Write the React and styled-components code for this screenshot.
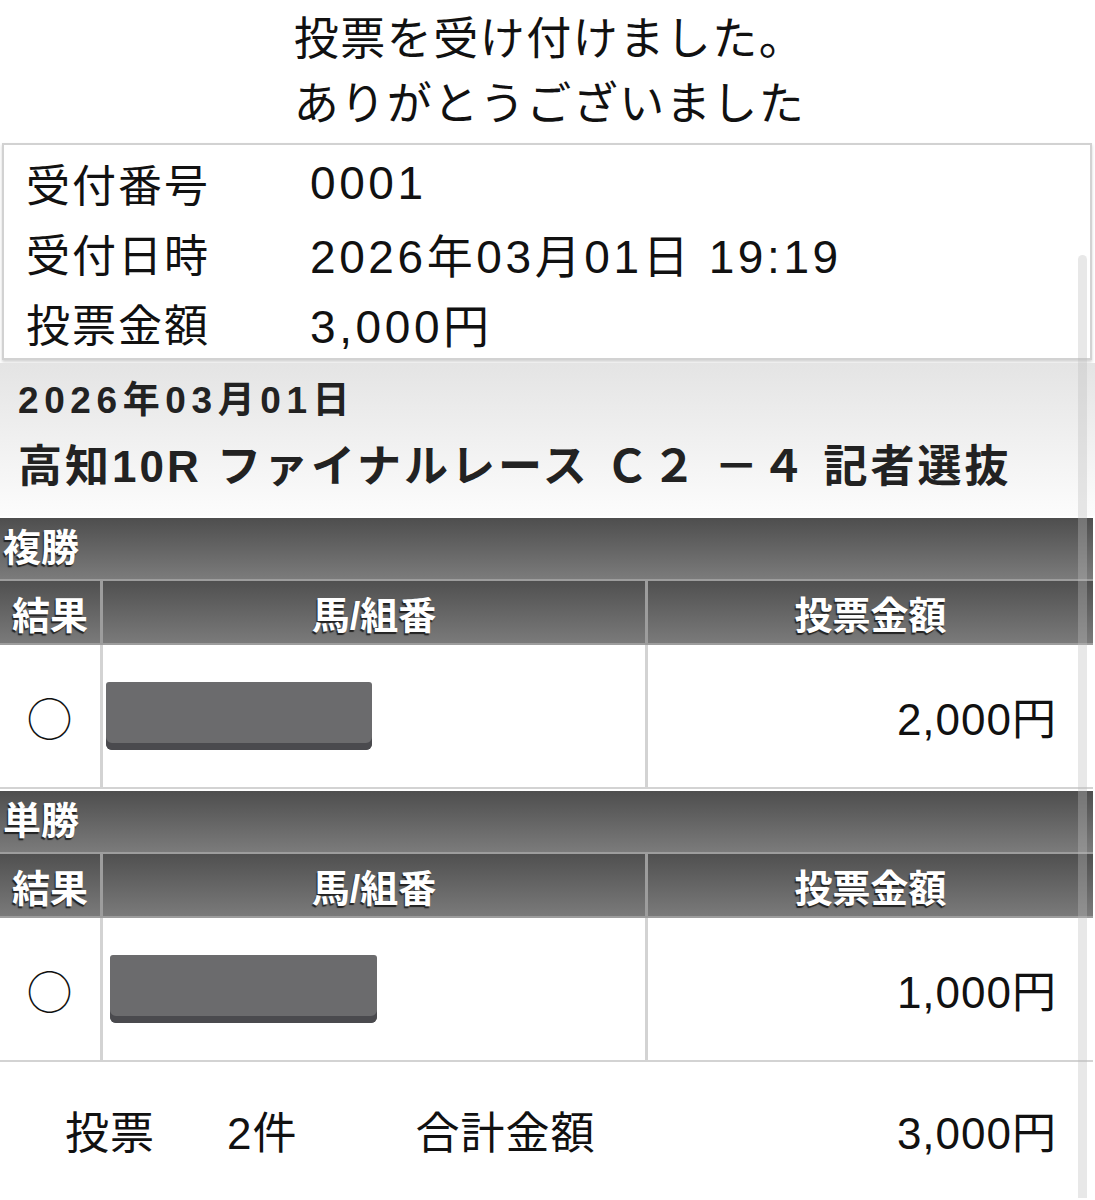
import styled, { createGlobalStyle } from "styled-components";

const GlobalStyle = createGlobalStyle`
  body {
    margin: 0;
    background: #ffffff;
    color: #111111;
    font-family: "Liberation Sans", "Noto Sans CJK JP", sans-serif;
  }
`;

const Page = styled.div`
  position: relative;
  width: 1095px;
  overflow: hidden;
`;

const Thanks = styled.div`
  padding-top: 3px;
  padding-left: 4px;
  text-align: center;
  font-size: 45px;
  line-height: 65px;
  letter-spacing: 1.5px;
  font-family: "Noto Sans CJK JP", sans-serif;
`;

const InfoBox = styled.div`
  margin: 10px 3px 0 2px;
  padding: 3px 0 0 22px;
  border: 2px solid #d2d2d2;
  box-shadow: 0 2px 3px rgba(0, 0, 0, 0.18);
`;

const InfoRow = styled.div`
  display: grid;
  grid-template-columns: 284px 1fr;
  height: 70px;
  align-items: center;
  font-size: 44px;
  letter-spacing: 2px;
`;

const InfoValue = styled.span`
  font-size: 46px;
  letter-spacing: 3.6px;
`;

const RaceHead = styled.div`
  margin-top: 3px;
  padding: 6px 0 15px 18px;
  background: linear-gradient(#e4e4e4, #fcfcfc);
  font-weight: bold;
  color: #222;
`;

const RaceDate = styled.div`
  font-size: 37px;
  line-height: 64px;
  letter-spacing: 5.6px;
`;

const RaceName = styled.div`
  font-size: 44px;
  line-height: 68px;
  letter-spacing: 3px;
  white-space: nowrap;
`;

const Section = styled.section`
  margin-top: 2px;
  padding-right: 2px;
`;

const TitleBar = styled.div`
  height: 61px;
  padding-left: 3px;
  border-bottom: 2px solid #9d9d9d;
  background: linear-gradient(#4e4e4e, #7b7b7b);
  color: #fff;
  font-size: 38px;
  font-weight: bold;
  line-height: 61px;
  text-shadow: -1px 2px 1px #222;
`;

const Row = styled.div`
  display: grid;
  grid-template-columns: 100px 542px 1fr;
  column-gap: 3px;
  padding-bottom: 2px;
  background: ${(p) => (p.$head ? "#9d9d9d" : "#d3d3d3")};
`;

const HeadCell = styled.div`
  height: 62px;
  display: flex;
  align-items: center;
  justify-content: center;
  background: linear-gradient(#505050, #7a7a7a);
  color: #fff;
  font-size: 38px;
  font-weight: bold;
  text-shadow: -1px 2px 1px #222;
`;

const Cell = styled.div`
  height: 142px;
  display: flex;
  align-items: center;
  justify-content: ${(p) => p.$align || "center"};
  padding: ${(p) => p.$pad || "0"};
  background: #fff;
  font-size: 44px;
  letter-spacing: 1px;
`;

const Mark = styled.span`
  font-family: "Noto Sans CJK JP", sans-serif;
  font-size: 46px;
  font-weight: 300;
`;

const Redacted = styled.div`
  width: ${(p) => p.$w}px;
  height: 68px;
  border-radius: 3px 3px 6px 6px;
  background: #6b6b6d;
  box-shadow: inset 0 -7px 0 #4a4a4e;
`;

const Footer = styled.div`
  display: flex;
  align-items: center;
  height: 136px;
  padding: 0 38px 0 65px;
  font-size: 44px;
  letter-spacing: 1px;
`;

const FootItem = styled.span`
  margin-left: ${(p) => p.$gap || 0}px;
`;

const Total = styled.span`
  margin-left: auto;
`;

const ScrollThumb = styled.div`
  position: absolute;
  top: 255px;
  right: 8px;
  bottom: -20px;
  width: 9px;
  border-radius: 5px;
  background: rgba(190, 190, 190, 0.35);
`;

const info = [
  ["受付番号", "0001"],
  ["受付日時", "2026年03月01日 19:19"],
  ["投票金額", "3,000円"],
];

const bets = [
  { type: "複勝", amount: "2,000円", boxW: 266, boxX: 3 },
  { type: "単勝", amount: "1,000円", boxW: 267, boxX: 7 },
];

const BetTable = ({ bet }) => (
  <Section>
    <TitleBar>{bet.type}</TitleBar>
    <Row $head>
      <HeadCell>結果</HeadCell>
      <HeadCell>馬/組番</HeadCell>
      <HeadCell>投票金額</HeadCell>
    </Row>
    <Row>
      <Cell>
        <Mark>○</Mark>
      </Cell>
      <Cell $align="flex-start" $pad={`0 0 0 ${bet.boxX}px`}>
        <Redacted $w={bet.boxW} />
      </Cell>
      <Cell $align="flex-end" $pad="0 36px 0 0">
        {bet.amount}
      </Cell>
    </Row>
  </Section>
);

export default function App() {
  return (
    <Page>
      <GlobalStyle />
      <Thanks>
        <div>投票を受け付けました。</div>
        <div>ありがとうございました</div>
      </Thanks>
      <InfoBox>
        {info.map(([label, value]) => (
          <InfoRow key={label}>
            <span>{label}</span>
            <InfoValue>{value}</InfoValue>
          </InfoRow>
        ))}
      </InfoBox>
      <RaceHead>
        <RaceDate>2026年03月01日</RaceDate>
        <RaceName>高知10R ファイナルレース Ｃ２ －４ 記者選抜</RaceName>
      </RaceHead>
      {bets.map((bet) => (
        <BetTable key={bet.type} bet={bet} />
      ))}
      <Footer>
        <FootItem>投票</FootItem>
        <FootItem $gap={72}>2件</FootItem>
        <FootItem $gap={118}>合計金額</FootItem>
        <Total>3,000円</Total>
      </Footer>
      <ScrollThumb />
    </Page>
  );
}
